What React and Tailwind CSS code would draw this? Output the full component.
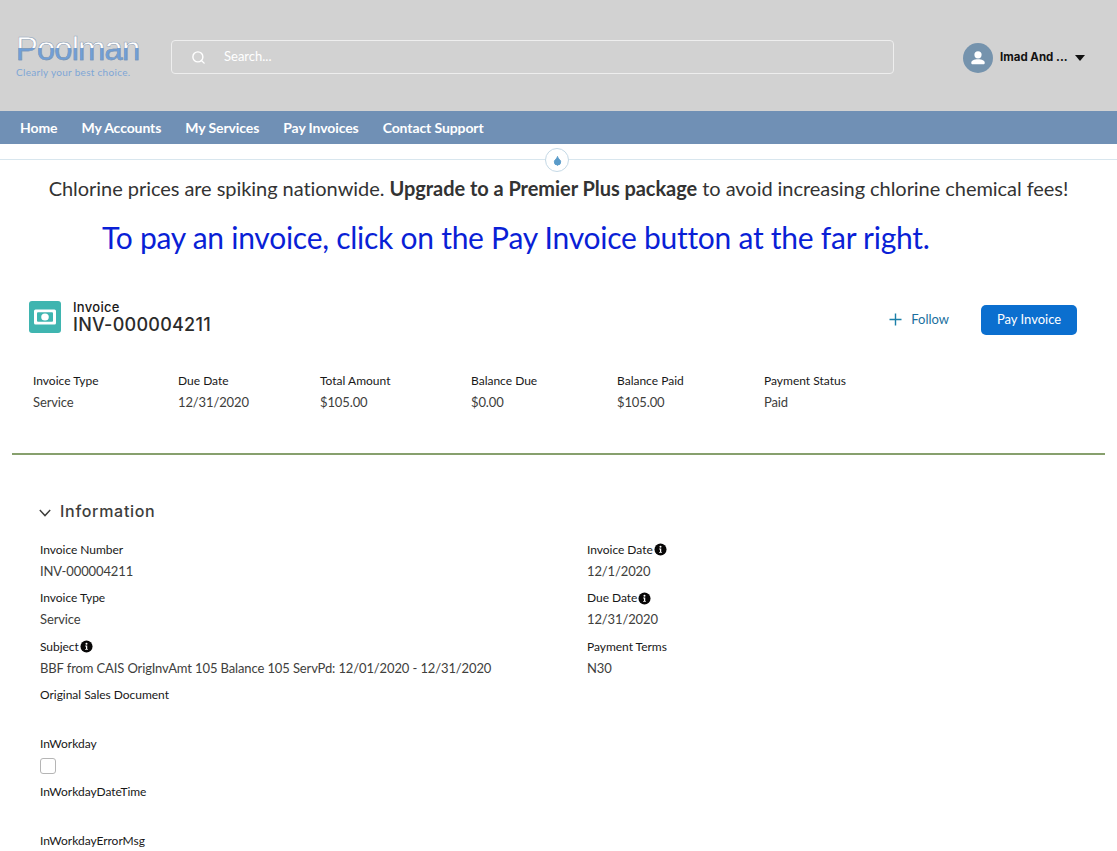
import { Search, Droplet } from "lucide-react";

const navLinks = ["Home", "My Accounts", "My Services", "Pay Invoices", "Contact Support"];

const highlights = [
  { label: "Invoice Type", value: "Service", width: "w-[145px]" },
  { label: "Due Date", value: "12/31/2020", width: "w-[142px]" },
  { label: "Total Amount", value: "$105.00", width: "w-[151px]" },
  { label: "Balance Due", value: "$0.00", width: "w-[146px]" },
  { label: "Balance Paid", value: "$105.00", width: "w-[147px]" },
  { label: "Payment Status", value: "Paid", width: "w-[120px]" },
];

const leftFields = [
  { label: "Invoice Number", value: "INV-000004211" },
  { label: "Invoice Type", value: "Service" },
  { label: "Subject", value: "BBF from CAIS OrigInvAmt 105 Balance 105 ServPd: 12/01/2020 - 12/31/2020", info: true },
  { label: "Original Sales Document" },
  { label: "InWorkday", checkbox: true },
  { label: "InWorkdayDateTime" },
  { label: "InWorkdayErrorMsg" },
];

const rightFields = [
  { label: "Invoice Date", value: "12/1/2020", info: true },
  { label: "Due Date", value: "12/31/2020", info: true },
  { label: "Payment Terms", value: "N30" },
];

function InfoIcon() {
  return (
    <svg viewBox="0 0 14 14" className="ml-px w-[13px] h-[13px] shrink-0">
      <circle cx="7" cy="7" r="6.5" fill="#080707" />
      <circle cx="7" cy="4" r="1.1" fill="#fff" />
      <path d="M5.6 6h2.2v3.6h.7v1H5.500v-1h.9V7h-.8z" fill="#fff" />
    </svg>
  );
}

function Field({ field }) {
  return (
    <div className="h-[48.6px]">
      <div className="flex items-center h-[18px] text-[12px] tracking-[-0.03px] text-[#181818]">
        <span>{field.label}</span>
        {field.info && <InfoIcon />}
      </div>
      {field.value && <div className="mt-[2px] text-[13px] leading-[20px] tracking-[-0.12px] text-[#3e3e3c]">{field.value}</div>}
      {field.checkbox && <div className="mt-[5px] w-4 h-4 border border-[#b5b5b5] rounded-[3px] bg-white"></div>}
    </div>
  );
}

export default function App() {
  return (
    <div className="h-[851px] w-[1117px] overflow-hidden bg-white font-['Lato','Open_Sans',sans-serif]">
      <header className="h-[111px] bg-[#d2d2d2] flex items-start">
        <div className="w-[171px] pl-[16px] pt-[31px]">
          <div className="font-['Liberation_Sans',sans-serif] text-[33px] leading-[35px] tracking-[-1px] w-fit text-transparent bg-clip-text [-webkit-text-stroke:0.5px_#7f92aa] bg-[linear-gradient(#ffffff_0%,#ffffff_50%,#6f9fd8_50%,#6f9fd8_100%)]">
            Poolman
          </div>
          <div className="text-[10px] leading-[12px] text-[#7ea6d6] tracking-[0.3px]">Clearly your best choice.</div>
        </div>
        <div className="mt-[40px] w-[723px] h-[34px] border border-[#eeeeee] rounded-[4px] flex items-center pl-[19px] text-white">
          <Search size={15} strokeWidth={2.25} />
          <span className="ml-[18px] text-[13px]">Search...</span>
        </div>
        <div className="ml-[69px] mt-[43px] flex items-center">
          <div className="w-[30px] h-[30px] rounded-full bg-[#7593ad] flex items-center justify-center">
            <svg viewBox="0 0 20 20" className="w-[18px] h-[18px]">
              <circle cx="10" cy="6.5" r="4" fill="#fff" />
              <path d="M2.500 15.500c0-3 3-4.200 7.500-4.200s7.500 1.200 7.500 4.200c0 1-.8 1.500-1.500 1.500H4c-.7 0-1.500-.5-1.500-1.500z" fill="#fff" />
            </svg>
          </div>
          <span className="ml-[7px] text-[11.5px] font-bold text-[#111] font-['Inter',sans-serif]">Imad And ...</span>
          <span className="ml-[7px] w-0 h-0 border-x-[5.5px] border-x-transparent border-t-[6px] border-t-[#111]"></span>
        </div>
      </header>

      <nav className="h-[33px] bg-[#7090b5] flex items-center gap-[24px] pl-[20px] text-[14px] font-bold text-white tracking-[-0.1px]">
        {navLinks.map((link) => (
          <a key={link}>{link}</a>
        ))}
      </nav>

      <div className="relative h-[29px]">
        <div className="h-[16px] border-b border-[#d8e6ee]"></div>
        <div className="absolute left-[545px] top-[4px] w-[24px] h-[24px] rounded-full bg-white border border-[#c5d9e6] flex items-center justify-center">
          <Droplet size={11} className="text-[#5a9bc9] fill-[#5a9bc9]" />
        </div>
      </div>

      <p className="text-center text-[20px] leading-[30px] text-[#333333] tracking-[-0.05px]">
        Chlorine prices are spiking nationwide. <b>Upgrade to a Premier Plus package</b> to avoid increasing chlorine chemical fees!
      </p>
      <p className="mt-[14px] pl-[102px] text-[30px] leading-[40px] tracking-[-0.26px] text-[#0a1fd6]">
        To pay an invoice, click on the Pay Invoice button at the far right.
      </p>

      <section className="mt-[42px] pl-[29px] pr-[40px] flex items-center">
        <div className="w-8 h-8 rounded-[3px] bg-[#3fb5b0] flex items-center justify-center">
          <svg viewBox="0 0 22 16" className="w-[22px] h-[16px]">
            <rect width="22" height="15" y="0.5" rx="1.5" fill="#fff" />
            <rect width="16" height="9.5" x="3" y="3.25" rx="1" fill="#3fb5b0" />
            <ellipse cx="11" cy="8" rx="3.8" ry="3.6" fill="#fff" />
          </svg>
        </div>
        <div className="ml-[12px] font-['Inter',sans-serif]">
          <div className="text-[13px] leading-[16px] font-medium tracking-[0.3px] text-[#181818]">Invoice</div>
          <div className="text-[18px] leading-[20px] font-medium tracking-[0.25px] text-[#2b2b2b]">INV-000004211</div>
        </div>
        <div className="ml-auto mt-[5px] flex items-center">
          <div className="flex items-center text-[13px] text-[#1b6f9e]">
            <svg viewBox="0 0 13 13" className="w-[13px] h-[13px] text-[#1b7fa8]">
              <path d="M6.500 0.500v12M0.500 6.500h12" stroke="currentColor" strokeWidth="1.4" fill="none" />
            </svg>
            <span className="ml-[9px]">Follow</span>
          </div>
          <button className="ml-[32px] w-[96px] h-[30px] rounded-[5px] bg-[#0b6fcf] text-white text-[13px]">Pay Invoice</button>
        </div>
      </section>

      <section className="mt-[37px] pl-[33px] flex">
        {highlights.map((item) => (
          <div key={item.label} className={item.width}>
            <div className="text-[12px] leading-[18px] text-[#181818]">{item.label}</div>
            <div className="mt-[2px] text-[13px] leading-[21px] tracking-[-0.12px] text-[#3e3e3c]">{item.value}</div>
          </div>
        ))}
      </section>

      <div className="mt-[40px] mx-[12px] border-t-2 border-[#87a06d]"></div>

      <section className="mt-[46px] pl-[39px]">
        <div className="flex items-center h-[20px] font-['Inter',sans-serif] text-[16px] font-medium tracking-[0.7px] text-[#3e3e3c]">
          <svg viewBox="0 0 12 8" className="w-[12px] h-[8px] mt-[3px]">
            <path d="M0.800 1l5.200 5.600l5.200-5.600" stroke="#3e3e3c" strokeWidth="1.4" fill="none" />
          </svg>
          <span className="ml-[9px]">Information</span>
        </div>
        <div className="mt-[19.500px] pl-[1px] flex">
          <div className="w-[547px]">
            {leftFields.map((field) => (
              <Field key={field.label} field={field} />
            ))}
          </div>
          <div>
            {rightFields.map((field) => (
              <Field key={field.label} field={field} />
            ))}
          </div>
        </div>
      </section>
    </div>
  );
}
